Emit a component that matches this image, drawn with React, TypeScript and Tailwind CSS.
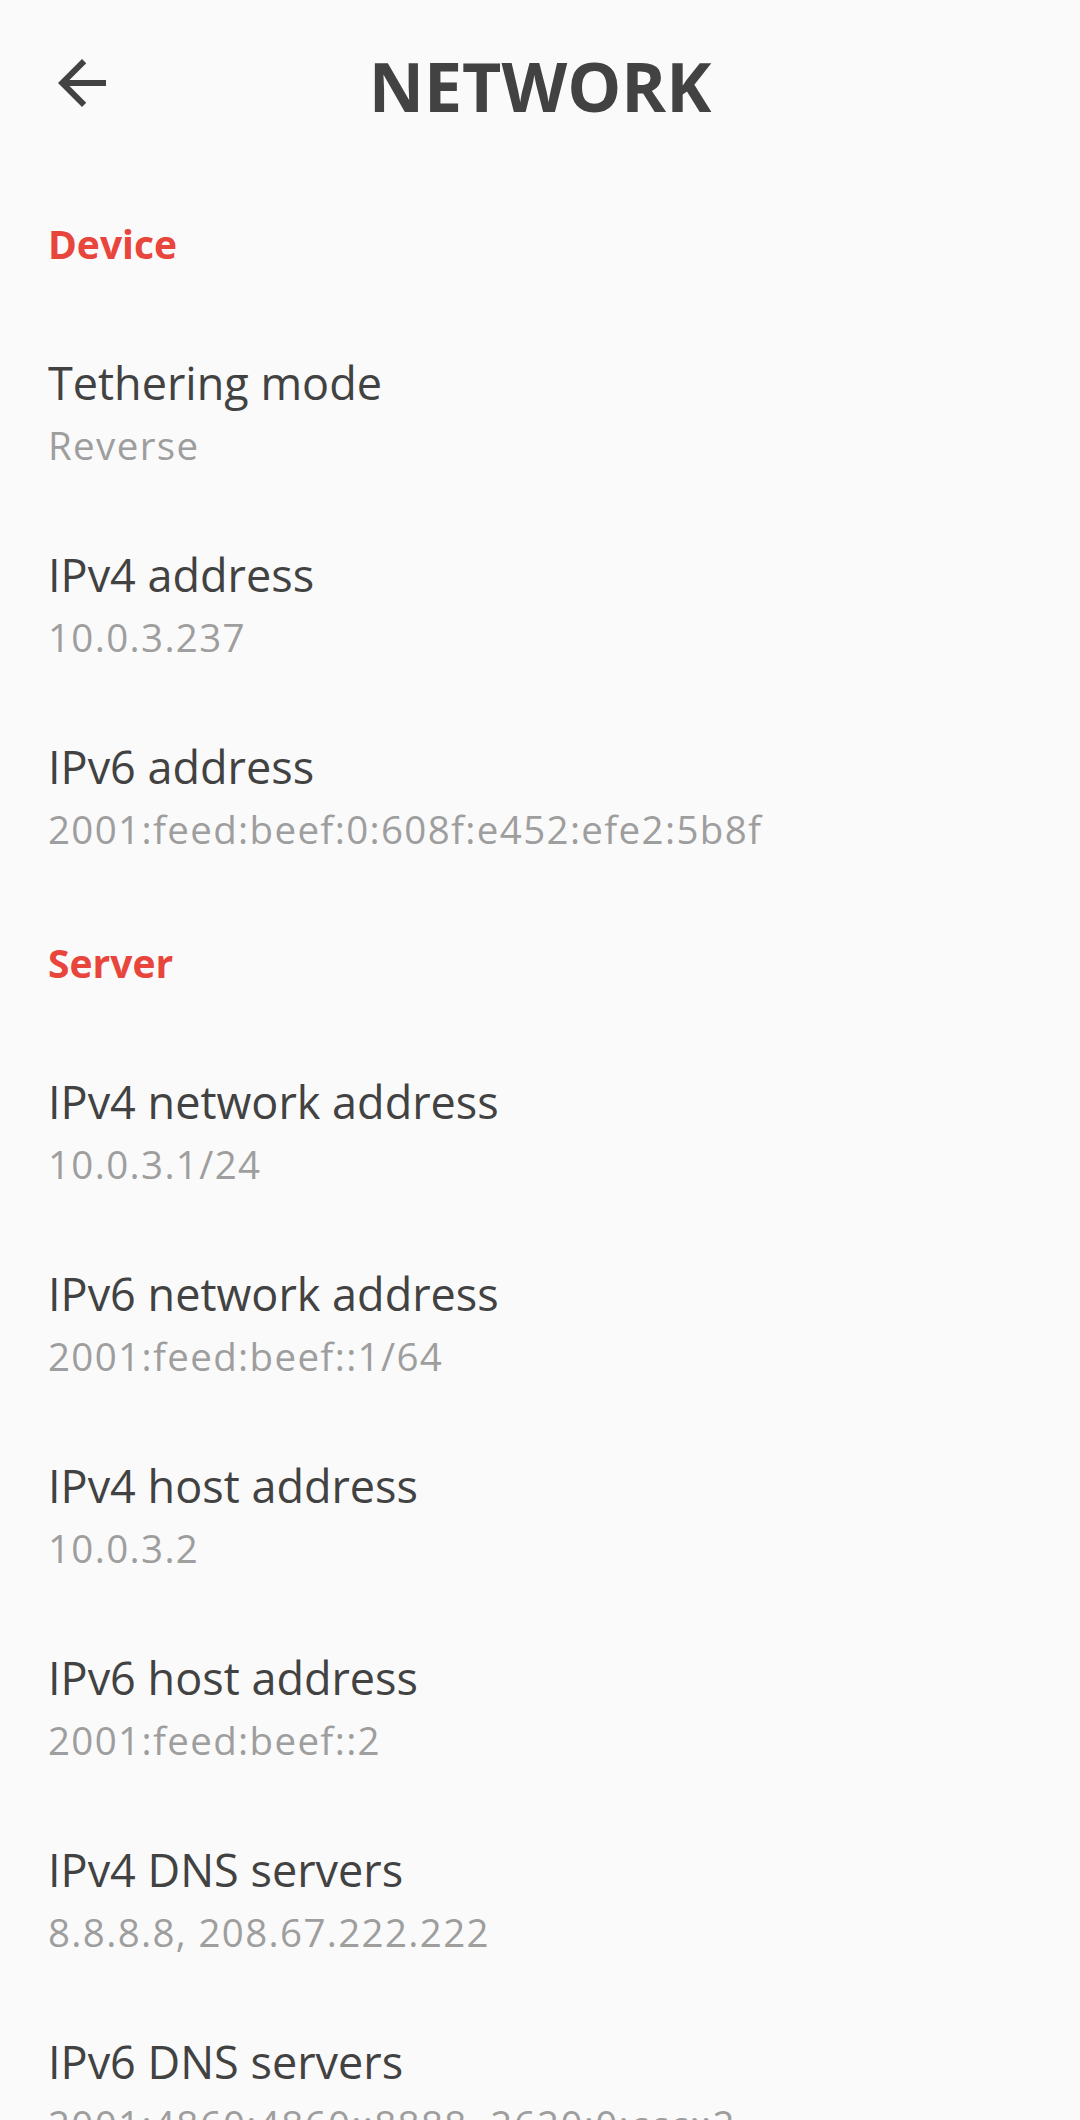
import React from 'react';

type Item = { title: string; value: string };

const device: Item[] = [
  { title: 'Tethering mode', value: 'Reverse' },
  { title: 'IPv4 address', value: '10.0.3.237' },
  { title: 'IPv6 address', value: '2001:feed:beef:0:608f:e452:efe2:5b8f' },
];

const server: Item[] = [
  { title: 'IPv4 network address', value: '10.0.3.1/24' },
  { title: 'IPv6 network address', value: '2001:feed:beef::1/64' },
  { title: 'IPv4 host address', value: '10.0.3.2' },
  { title: 'IPv6 host address', value: '2001:feed:beef::2' },
  { title: 'IPv4 DNS servers', value: '8.8.8.8, 208.67.222.222' },
  { title: 'IPv6 DNS servers', value: '2001:4860:4860::8888, 2620:0:ccc::2' },
];

const SectionHeader: React.FC<{ label: string }> = ({ label }) => (
  <div className="pl-[48px] pt-[46px] pb-[45px]">
    <div className="text-[39px] leading-[52px] font-bold text-[#e8453c]">{label}</div>
  </div>
);

const Row: React.FC<Item> = ({ title, value }) => (
  <div className="h-[192px] pl-[48px] pt-[38px] flex flex-col">
    <div className="text-[45px] leading-[60px] text-[#424242]">{title}</div>
    <div className="mt-[8px] text-[38.5px] leading-[48px] text-[#9e9e9e] tracking-[1.35px] whitespace-nowrap">
      {value}
    </div>
  </div>
);

export default function App() {
  return (
    <div
      className="w-[1080px] h-[2120px] overflow-hidden bg-[#fafafa]"
      style={{ fontFamily: '"Open Sans", "Noto Sans", sans-serif' }}
    >
      {/* Toolbar */}
      <div className="relative h-[172px] flex items-center justify-center">
        <svg
          className="absolute left-[46px] top-[47px] w-[72px] h-[72px]"
          viewBox="0 0 24 24"
          fill="#424242"
        >
          <path d="M20 11H7.83l5.59-5.59L12 4l-8 8 8 8 1.41-1.41L7.83 13H20v-2z" />
        </svg>
        <h1 className="text-[68px] leading-none font-bold text-[#424242]">NETWORK</h1>
      </div>

      <SectionHeader label="Device" />
      {device.map((it) => (
        <Row key={it.title} {...it} />
      ))}

      <SectionHeader label="Server" />
      {server.map((it) => (
        <Row key={it.title} {...it} />
      ))}
    </div>
  );
}
